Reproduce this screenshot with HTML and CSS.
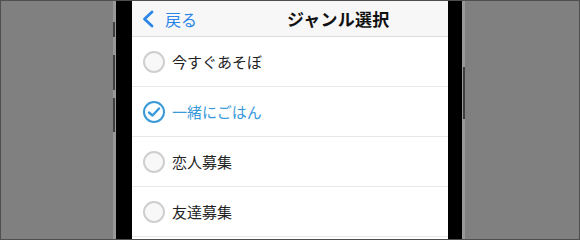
FILE: index.html
```html
<!DOCTYPE html>
<html lang="ja">
<head>
<meta charset="utf-8">
<link rel="stylesheet" href="styles.css">
</head>
<body>
<div class="stage">
  <div class="phone">
    <span class="btn btn-mute"></span>
    <span class="btn btn-vup"></span>
    <span class="btn btn-vdown"></span>
    <span class="btn btn-power"></span>
    <div class="screen">
      <div class="navbar">
        <div class="back">
          <svg class="chev" width="14" height="18" viewBox="0 0 14 18"><path d="M11 2 L3.5 9 L11 16" fill="none" stroke="#2c86e8" stroke-width="2.8" stroke-linecap="round" stroke-linejoin="round"/></svg>
          <span class="back-label">戻る</span>
        </div>
        <div class="title">ジャンル選択</div>
      </div>
      <ul class="list">
        <li class="row"><span class="radio"></span><span class="label">今すぐあそぼ</span></li>
        <li class="row selected"><span class="radio on"><svg width="14" height="12" viewBox="0 0 14 12"><path d="M2 6.5 L5.5 9.5 L12 2.5" fill="none" stroke="#3a9ad9" stroke-width="2.4" stroke-linecap="round" stroke-linejoin="round"/></svg></span><span class="label">一緒にごはん</span></li>
        <li class="row"><span class="radio"></span><span class="label">恋人募集</span></li>
        <li class="row"><span class="radio"></span><span class="label">友達募集</span></li>
      </ul>
    </div>
  </div>
</div>
</body>
</html>
```

FILE: styles.css
```css
* { box-sizing: border-box; }
html, body { margin: 0; padding: 0; }
body {
  font-family: "Noto Sans CJK JP", "Noto Sans", sans-serif;
  background: #808080;
}
.stage {
  width: 580px;
  height: 240px;
  border: 1px solid #4f4f4f;
  background: #808080;
  overflow: hidden;
  display: flex;
}
.phone {
  position: relative;
  margin-left: 112px;
  width: 352px;
  height: 238px;
  border-left: 3px solid #989898;
  border-right: 3px solid #989898;
  background: #000;
  padding: 0 14px 0 16px;
}
.btn {
  position: absolute;
  width: 2px;
  background: #3e3e3e;
}
.btn-mute { left: -3px; top: 21px; height: 15px; }
.btn-vup { left: -3px; top: 54px; height: 35px; }
.btn-vdown { left: -3px; top: 97px; height: 34px; }
.btn-power { right: -3px; top: 66px; height: 52px; }
.screen {
  width: 316px;
  height: 238px;
  background: #fff;
  overflow: hidden;
}
.navbar {
  height: 36px;
  background: #f7f7f7;
  border-bottom: 1px solid #dcdcdc;
  display: flex;
  align-items: center;
  padding-left: 9px;
}
.back {
  display: flex;
  align-items: center;
  color: #2c86e8;
  font-size: 16px;
  width: 146px;
}
.chev { margin-right: 10px; }
.back-label { line-height: 1; }
.title {
  font-size: 17px;
  font-weight: 700;
  color: #111;
  letter-spacing: 0.2px;
}
.list {
  list-style: none;
  margin: 0;
  padding: 0;
}
.row {
  height: 50px;
  border-bottom: 1px solid #e8e8e8;
  display: flex;
  align-items: center;
  padding-left: 11px;
}
.radio {
  width: 22px;
  height: 22px;
  border-radius: 50%;
  border: 2px solid #cfcfcf;
  background: #f8f8f8;
  display: flex;
  align-items: center;
  justify-content: center;
  margin-right: 7px;
  flex: none;
}
.radio.on {
  border-color: #3a9ad9;
  background: #fff;
}
.label {
  font-size: 15px;
  color: #222;
}
.selected .label { color: #3a9ad9; }
```
